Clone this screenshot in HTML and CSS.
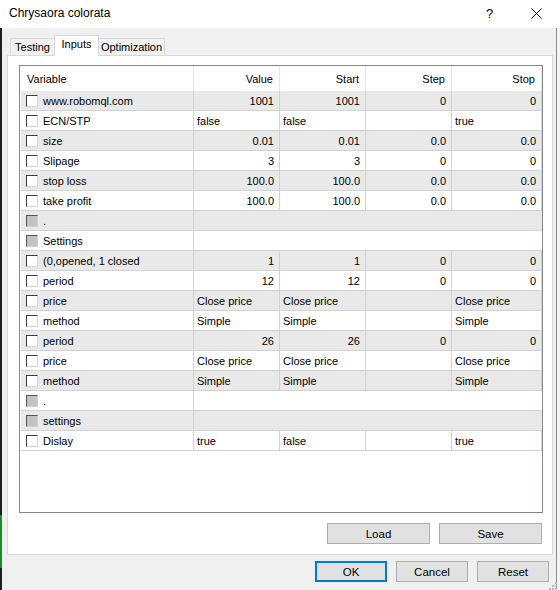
FILE: index.html
```html
<!DOCTYPE html>
<html>
<head>
<meta charset="utf-8">
<link rel="stylesheet" href="styles.css">
</head>
<body>
<div class="titlebar">
  <span class="title">Chrysaora colorata</span>
  <span class="help">?</span>
  <span class="close"><svg width="11" height="11" viewBox="0 0 11 11"><path d="M0.5 0.5 L10.5 10.5 M10.5 0.5 L0.5 10.5" stroke="#000" stroke-width="1" fill="none"/></svg></span>
</div>
<div class="frame">
  <div class="edge-left"></div>
  <div class="dialog">
    <div class="tabs">
      <div class="tab t-testing">Testing</div>
      <div class="tab t-inputs active">Inputs</div>
      <div class="tab t-opt">Optimization</div>
    </div>
    <div class="panel">
      <div class="listbox">
        <div class="row head">
          <div class="cell left">Variable</div>
          <div class="cell num">Value</div>
          <div class="cell num">Start</div>
          <div class="cell num">Step</div>
          <div class="cell num">Stop</div>
        </div>
        <div class="row odd"><div class="cell name"><span class="cb"></span>www.robomql.com</div><div class="cell num">1001</div><div class="cell num">1001</div><div class="cell num">0</div><div class="cell num">0</div></div>
        <div class="row"><div class="cell name"><span class="cb"></span>ECN/STP</div><div class="cell txt">false</div><div class="cell txt">false</div><div class="cell txt"></div><div class="cell txt">true</div></div>
        <div class="row odd"><div class="cell name"><span class="cb"></span>size</div><div class="cell num">0.01</div><div class="cell num">0.01</div><div class="cell num">0.0</div><div class="cell num">0.0</div></div>
        <div class="row"><div class="cell name"><span class="cb"></span>Slipage</div><div class="cell num">3</div><div class="cell num">3</div><div class="cell num">0</div><div class="cell num">0</div></div>
        <div class="row odd"><div class="cell name"><span class="cb"></span>stop loss</div><div class="cell num">100.0</div><div class="cell num">100.0</div><div class="cell num">0.0</div><div class="cell num">0.0</div></div>
        <div class="row"><div class="cell name"><span class="cb"></span>take profit</div><div class="cell num">100.0</div><div class="cell num">100.0</div><div class="cell num">0.0</div><div class="cell num">0.0</div></div>
        <div class="row odd"><div class="cell name"><span class="cb grey"></span>.</div><div class="cell span"></div></div>
        <div class="row"><div class="cell name"><span class="cb grey"></span>Settings</div><div class="cell span"></div></div>
        <div class="row odd"><div class="cell name"><span class="cb"></span>(0,opened, 1 closed</div><div class="cell num">1</div><div class="cell num">1</div><div class="cell num">0</div><div class="cell num">0</div></div>
        <div class="row"><div class="cell name"><span class="cb"></span>period</div><div class="cell num">12</div><div class="cell num">12</div><div class="cell num">0</div><div class="cell num">0</div></div>
        <div class="row odd"><div class="cell name"><span class="cb"></span>price</div><div class="cell txt">Close price</div><div class="cell txt">Close price</div><div class="cell txt"></div><div class="cell txt">Close price</div></div>
        <div class="row"><div class="cell name"><span class="cb"></span>method</div><div class="cell txt">Simple</div><div class="cell txt">Simple</div><div class="cell txt"></div><div class="cell txt">Simple</div></div>
        <div class="row odd"><div class="cell name"><span class="cb"></span>period</div><div class="cell num">26</div><div class="cell num">26</div><div class="cell num">0</div><div class="cell num">0</div></div>
        <div class="row"><div class="cell name"><span class="cb"></span>price</div><div class="cell txt">Close price</div><div class="cell txt">Close price</div><div class="cell txt"></div><div class="cell txt">Close price</div></div>
        <div class="row odd"><div class="cell name"><span class="cb"></span>method</div><div class="cell txt">Simple</div><div class="cell txt">Simple</div><div class="cell txt"></div><div class="cell txt">Simple</div></div>
        <div class="row"><div class="cell name"><span class="cb grey"></span>.</div><div class="cell span"></div></div>
        <div class="row odd"><div class="cell name"><span class="cb grey"></span>settings</div><div class="cell span"></div></div>
        <div class="row"><div class="cell name"><span class="cb"></span>Dislay</div><div class="cell txt">true</div><div class="cell txt">false</div><div class="cell txt"></div><div class="cell txt">true</div></div>
      </div>
      <div class="panel-buttons">
        <button class="btn wide">Load</button>
        <button class="btn wide">Save</button>
      </div>
    </div>
    <div class="footer">
      <button class="btn small default">OK</button>
      <button class="btn small">Cancel</button>
      <button class="btn small">Reset</button>
    </div>
    <svg class="grip" width="10" height="12" viewBox="0 0 10 12">
      <rect x="7" y="2" width="2" height="2" fill="#b8b8b8"/>
      <rect x="4" y="5" width="2" height="2" fill="#b8b8b8"/>
      <rect x="7" y="5" width="2" height="2" fill="#b8b8b8"/>
      <rect x="1" y="8" width="2" height="2" fill="#b8b8b8"/>
      <rect x="4" y="8" width="2" height="2" fill="#b8b8b8"/>
      <rect x="7" y="8" width="2" height="2" fill="#b8b8b8"/>
    </svg>
  </div>
  <div class="edge-right"></div>
</div>
</body>
</html>
```
FILE: styles.css
```css
* { box-sizing: border-box; }
html, body {
  margin: 0;
  padding: 0;
  background: #f0f0f0;
  font-family: "Liberation Sans", Arial, sans-serif;
  font-size: 11px;
  color: #000;
}
.titlebar {
  height: 28px;
  background: #fff;
  display: flex;
  align-items: center;
  position: relative;
}
.title {
  margin-left: 9px;
  font-size: 12px;
  margin-top: -2px;
}
.help {
  position: absolute;
  left: 486px;
  top: 6px;
  font-size: 13px;
}
.close {
  position: absolute;
  left: 531px;
  top: 8px;
  width: 11px;
  height: 11px;
  display: block;
}
.close svg { display: block; }

.frame {
  display: flex;
  height: 562px;
}
.edge-left {
  width: 2px;
  background: linear-gradient(to bottom, #1f1f1f 0, #1f1f1f 487px, #1c8a2c 487px, #1c8a2c 540px, #1f1f1f 540px);
}
.edge-right {
  width: 4px;
  border-left: 1px solid #8a8a8a;
  background: #f4f4f4;
}
.dialog {
  width: 554px;
  position: relative;
  display: flex;
  flex-direction: column;
}

.tabs {
  height: 27px;
  display: flex;
  align-items: flex-end;
  padding-left: 8px;
  position: relative;
  z-index: 1;
}
.tab {
  height: 17px;
  border: 1px solid #d9d9d9;
  border-bottom: none;
  background: #f0f0f0;
  text-align: center;
  line-height: 16px;
}
.t-testing { width: 44px; border-right: none; }
.t-inputs { width: 45px; }
.t-opt { width: 66px; border-left: none; }
.tab.active {
  height: 21px;
  background: #fff;
  margin-bottom: -1px;
  line-height: 17px;
}

.panel {
  margin-left: 5px;
  width: 546px;
  height: 500px;
  background: #fff;
  border: 1px solid #d9d9d9;
  display: flex;
  flex-direction: column;
}
.listbox {
  margin-top: 9px;
  margin-left: 11px;
  width: 524px;
  height: 448px;
  border: 1px solid #828790;
  padding-left: 1px;
  background: #fff;
}
.row {
  display: grid;
  grid-template-columns: 173px 86px 86px 86px 90px;
  height: 20px;
}
.row.odd { background: #e9e9e9; }
.cell {
  border-right: 1px solid #d2d2d2;
  border-bottom: 1px solid #d2d2d2;
  line-height: 18px;
  padding-top: 1px;
  white-space: nowrap;
  overflow: hidden;
}
.cell.num { text-align: right; padding-right: 5px; }
.cell.txt { padding-left: 3px; }
.cell.span { grid-column: span 4; border-right: none; }
.cell.name {
  display: flex;
  align-items: center;
  padding-left: 5px;
}
.row.head {
  height: 25px;
  background: #fff;
}
.row.head .cell {
  line-height: 24px;
  border-right: 1px solid #e5e5e5;
  border-bottom: none;
}
.row.head .cell.left { padding-left: 6px; }
.row.head .cell.num { padding-right: 6px; }

.cb {
  width: 12px;
  height: 12px;
  border: 1px solid;
  border-color: #3c3c3c #d6d6d6 #d6d6d6 #3c3c3c;
  background: #fff;
  margin-right: 5px;
  margin-top: -1px;
  flex: none;
}
.cb.grey { background: #c2c2c2; border-color: #555 #d0d0d0 #d0d0d0 #555; }

.panel-buttons {
  margin-top: 10px;
  margin-right: 10px;
  display: flex;
  justify-content: flex-end;
  gap: 9px;
}
.btn {
  height: 21px;
  background: #e1e1e1;
  border: 1px solid #adadad;
  font-family: "Liberation Sans", Arial, sans-serif;
  font-size: 11.5px;
  color: #000;
  padding: 0;
  margin: 0;
}
.btn.wide { width: 103px; }
.btn.small { width: 72px; }
.btn.default { border: 2px solid #0078d7; }
.footer {
  margin-top: 6px;
  margin-right: 7px;
  display: flex;
  justify-content: flex-end;
  gap: 9px;
}
.grip {
  position: absolute;
  right: -2px;
  bottom: -2px;
}
```
